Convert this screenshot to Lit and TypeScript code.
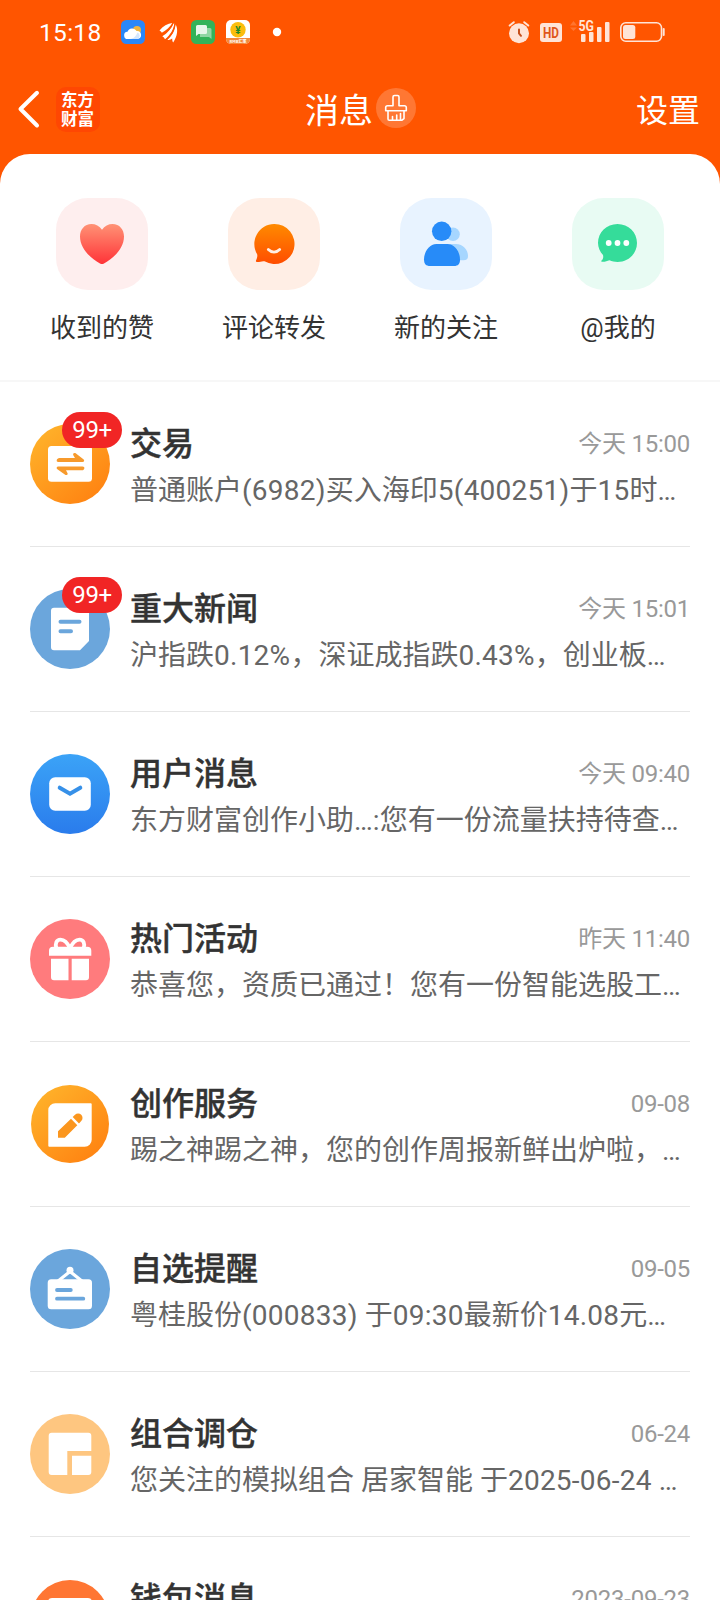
import { LitElement, html, css, svg, nothing, TemplateResult } from "lit";
import { customElement, property } from "lit/decorators.js";

interface Message {
  icon: string;
  title: string;
  time: string;
  text: string;
  badge?: string;
}

const MESSAGES: Message[] = [
  { icon: "trade", title: "交易", time: "今天 15:00", text: "普通账户(6982)买入海印5(400251)于15时…", badge: "99+" },
  { icon: "news", title: "重大新闻", time: "今天 15:01", text: "沪指跌0.12%，深证成指跌0.43%，创业板…", badge: "99+" },
  { icon: "mail", title: "用户消息", time: "今天 09:40", text: "东方财富创作小助…:您有一份流量扶持待查…" },
  { icon: "gift", title: "热门活动", time: "昨天 11:40", text: "恭喜您，资质已通过！您有一份智能选股工…" },
  { icon: "edit", title: "创作服务", time: "09-08", text: "踢之神踢之神，您的创作周报新鲜出炉啦，…" },
  { icon: "sign", title: "自选提醒", time: "09-05", text: "粤桂股份(000833) 于09:30最新价14.08元…" },
  { icon: "combo", title: "组合调仓", time: "06-24", text: "您关注的模拟组合 居家智能 于2025-06-24 …" },
  { icon: "wallet", title: "钱包消息", time: "2023-09-23", text: "" },
];

const gradient = (id: string, from: string, to: string, diagonal = false) => svg`
  <defs><linearGradient id=${id} x1=${diagonal ? 0.15 : 0.5} y1=${diagonal ? 0.1 : 0} x2=${diagonal ? 0.85 : 0.5} y2=${diagonal ? 0.9 : 1}>
    <stop offset="0" stop-color=${from}></stop><stop offset="1" stop-color=${to}></stop>
  </linearGradient></defs>`;

const ROW_ICONS: Record<string, TemplateResult> = {
  trade: svg`${gradient("g", "#ffb029", "#ff8412", true)}
    <circle cx="40" cy="40" r="40" fill="url(#g)"></circle>
    <rect x="18" y="22" width="44" height="35.700" rx="3.500" fill="#fff"></rect>
    <path fill="#f79a2c" d="M28.300 38H52.500c1.800 0 2.200-1.800.9-2.800L46 29.600c-2-1.400-3.800.4-2.400 2.200L45 34H29.500c-3 0-3.800 4-1.200 4z"></path>
    <path fill="#f79a2c" d="M52.500 42.500H28.300c-1.800 0-2.200 1.800-.9 2.800l7.400 5.300c2 1.400 3.800-.4 2.400-2.200L36 46.300h16c2.700 0 3.500-3.800.5-3.800z"></path>`,
  news: svg`<circle cx="40" cy="40" r="40" fill="#6ba6dc"></circle>
    <path fill="#fff" d="M24 18.700h32a3 3 0 0 1 3 3V52l-9 9.300H24a3 3 0 0 1-3-3V21.700a3 3 0 0 1 3-3z"></path>
    <path stroke="#6ba6dc" stroke-width="4" stroke-linecap="round" d="M30.500 32.700h19M30.500 42.300h10.500"></path>`,
  mail: svg`${gradient("g", "#3ba3f7", "#2a7cec")}
    <circle cx="40" cy="40" r="40" fill="url(#g)"></circle>
    <rect x="19.200" y="23.300" width="41.600" height="33.400" rx="6" fill="#fff"></rect>
    <path fill="none" stroke="#3690e8" stroke-width="4" stroke-linecap="round" d="M29.700 33.700l10.300 6.100 10.300-6.100"></path>`,
  gift: svg`<circle cx="40" cy="40" r="40" fill="#ff7b7d"></circle>
    <path fill="none" stroke="#fff" stroke-width="3.800" d="M40 29.500C37.500 23.500 34 20.600 30.500 20.600c-4 0-5.600 4-4.200 8.400M40 29.500C42.500 23.500 46 20.600 49.500 20.600c4 0 5.600 4 4.200 8.400"></path>
    <path fill="#fff" d="M23 27.700h34.300a4 4 0 0 1 4 4v5H19v-5a4 4 0 0 1 4-4zM21 39.700h17.500v21.600H24a3 3 0 0 1-3-3zM41.700 39.700H59v18.600a3 3 0 0 1-3 3H41.700z"></path>`,
  edit: svg`${gradient("g", "#ffb029", "#ff8412", true)}
    <circle cx="40" cy="40" r="39" fill="url(#g)"></circle>
    <path fill="#fff" d="M25.300 19.300h35.400a1 1 0 0 1 1 1v35.400a7 7 0 0 1-7 7H19.300a1 1 0 0 1-1-1V26.300a7 7 0 0 1 7-7z"></path>
    <path fill="#fb961e" d="M28 53.700v-6.500L41 34.800l6.300 6.500L34.800 53.700zM42.700 33l2.300-2.200a4.400 4.400 0 0 1 6.200 6.300L49 39.500z"></path>`,
  sign: svg`<circle cx="40" cy="40" r="40" fill="#6ba6dc"></circle>
    <rect x="17.700" y="30.300" width="44.300" height="30" rx="3.500" fill="#fff"></rect>
    <path fill="none" stroke="#fff" stroke-width="3.200" d="M27.500 32.500L40 22.500l12.500 10"></path>
    <circle cx="40" cy="21.300" r="3.500" fill="#fff"></circle>
    <path stroke="#6ba6dc" stroke-width="3.800" stroke-linecap="round" d="M27 41h13.800M27 49.700h26.300"></path>`,
  combo: svg`<circle cx="40" cy="40" r="40" fill="#fec680"></circle>
    <path fill="#fff" d="M21.700 18.700h36.600a3 3 0 0 1 3 3V37h-24v24H21.700a3 3 0 0 1-3-3V21.700a3 3 0 0 1 3-3zM42 41.700h19.300V58a3 3 0 0 1-3 3H42z"></path>`,
  wallet: svg`<circle cx="40" cy="40" r="39" fill="#ff7633"></circle>
    <rect x="18" y="19" width="44" height="42" rx="4" fill="#fff"></rect>`,
};

const QUICK: { label: string; tone: string; art: TemplateResult }[] = [
  {
    label: "收到的赞", tone: "pink",
    art: svg`${gradient("heart", "#ff9275", "#ff3338")}
      <path fill="url(#heart)" d="M46 31.800C43.500 28 39.500 26 35.500 26 28.500 26 24 31.500 24 38.500 24 50 34 60 44 65.500c1.500.8 2.500.8 4 0C58 60 68 50 68 38.500 68 31.500 63.500 26 56.500 26c-4 0-8 2-10.500 5.800z"></path>`,
  },
  {
    label: "评论转发", tone: "peach",
    art: svg`${gradient("smile", "#ff8a00", "#ff4d00")}
      <path fill="url(#smile)" d="M46 26a20 20 0 1 1-9.500 37.300c-2.500-.6-4.500.8-7.500.7-1 0-1.300-.6-1-1.400.8-2.300 1.900-4.600 1-6.600A20 20 0 0 1 46 26z"></path>
      <path fill="none" stroke="#ffeee4" stroke-width="2.800" stroke-linecap="round" d="M40.300 51.500c3.300 3.400 8.100 3.400 11.400 0"></path>`,
  },
  {
    label: "新的关注", tone: "blue",
    art: svg`<circle cx="53" cy="36.300" r="6.800" fill="#a6d6ff"></circle>
      <path fill="#a6d6ff" d="M50 46h6c7 0 12 6 12 12 0 3-1.500 4.300-4.500 4.300H50z"></path>
      <circle cx="41.700" cy="33.300" r="9.700" fill="#278bf8"></circle>
      <path fill="#278bf8" d="M36.500 46h11C55 46 60 54 60 61.500c0 4.500-2 6.500-6 6.500H30c-4 0-6-2-6-6.500C24 54 29 46 36.500 46z"></path>`,
  },
  {
    label: "@我的", tone: "green",
    art: svg`<path fill="#35dc9a" d="M45.500 26C56.500 26 65 34.500 65 45s-8.500 19-19.500 19c-3 0-5.500-.6-8-1.700-2.500.8-4.500 1.700-7.500 1.500-1 0-1-.7-.4-1.200 1.700-1.600 1.900-3.600 1.400-5.600-3-3.200-5-7.400-5-12C26 34.500 34.500 26 45.500 26z"></path>
      <g fill="#fff"><circle cx="36.700" cy="45" r="2.900"></circle><circle cx="45.500" cy="45" r="2.900"></circle><circle cx="54.300" cy="45" r="2.900"></circle></g>`,
  },
];

@customElement("status-bar")
class StatusBar extends LitElement {
  static styles = css`
    :host { display: flex; align-items: center; height: 64px; padding: 0 55px 0 39px; box-sizing: border-box;
      color: #fff; font-family: Roboto, sans-serif; }
    .clock { width: 82px; padding-top: 2px; font-size: 24.500px; font-weight: 450; line-height: 62px; letter-spacing: 0.3px; }
    .left { display: flex; align-items: center; gap: 11px; }
    .right { display: flex; align-items: center; margin-left: auto; gap: 8px; }
    svg { display: block; overflow: visible; }
    .hd { font: 700 15px Roboto, sans-serif; }
    .net { font: 700 14px Roboto, sans-serif; }
    .tiny { font: 700 4px "Noto Sans CJK SC", sans-serif; }
    .yen { font: 700 10px Roboto, sans-serif; }
  `;

  render() {
    return html`
      <span class="clock">15:18</span>
      <div class="left">
        <svg width="24" height="24" viewBox="0 0 24 24">
          <rect width="24" height="24" rx="5.500" fill="#2a87f8"></rect>
          <circle cx="16" cy="10" r="4" fill="#f0b53f"></circle>
          <path fill="#fff" d="M7 19a3.600 3.600 0 0 1-.5-7.200A5 5 0 0 1 15.600 11a4 4 0 0 1 .9 8z"></path>
          <path fill="#d5e7fd" d="M9 19c4-.5 6-3 7.500-6.500A3.500 3.500 0 0 1 16.500 19z"></path>
        </svg>
        <svg width="24" height="24" viewBox="0 0 24 24" fill="#fff">
          <path d="M3.500 10.500C7 6 11.500 3.400 16.500 3c-2.500 4-6.300 7.200-10.700 9.800-.4-1-1.300-1.700-2.300-2.300z"></path>
          <path d="M6.300 16.300C11.500 13 15.500 8.500 17.500 3.200l.8.300C17.800 9.500 14 15.300 9 19.200c-.5-1.200-1.400-2.200-2.700-2.900z"></path>
          <path d="M11.300 19.800C16 15.800 19 10.500 19.600 4.200 22.300 9 21.500 16 17.200 22.500c-.8-1-1-2.300-1-4-1.400 1.200-3 1.800-4.900 1.300z"></path>
          <path fill="none" stroke="#ff5500" stroke-width="1.100" d="M5.500 15.200C11 12 15.300 7.800 17.300 2.800M9.500 20.500C15 16 18.600 10 19 3.500"></path>
        </svg>
        <svg width="24" height="24" viewBox="0 0 24 24">
          <rect width="24" height="24" rx="5.500" fill="#32b359"></rect>
          <path fill="#8fd6a3" d="M9 8h10a1.500 1.500 0 0 1 1.500 1.500V19L18 17H9z"></path>
          <path fill="#e6f6ea" d="M6.500 5h8A1.500 1.500 0 0 1 16 6.500v6a1.500 1.500 0 0 1-1.500 1.500H7.500L5 16V6.500A1.500 1.500 0 0 1 6.500 5z"></path>
        </svg>
        <svg width="24" height="24" viewBox="0 0 24 24">
          <rect width="24" height="24" rx="5" fill="#fff"></rect>
          <path fill="#f4893a" d="M0 18h24v1a5 5 0 0 1-5 5H5a5 5 0 0 1-5-5z"></path>
          <circle cx="12" cy="9.800" r="7.700" fill="#fbbd0d"></circle>
          <text class="yen" x="12" y="13.500" text-anchor="middle" fill="#228b26">¥</text>
          <text class="tiny" x="12" y="23" text-anchor="middle" fill="#fff">RMB汇率</text>
        </svg>
        <svg width="36" height="24" viewBox="0 0 36 24"><circle cx="16" cy="12" r="4.200" fill="#fff"></circle></svg>
      </div>
      <div class="right">
        <svg width="24" height="24" viewBox="0 0 24 24">
          <circle cx="11" cy="13.200" r="10" fill="#ffe4d7"></circle>
          <path stroke="#ffe4d7" stroke-width="2" stroke-linecap="round" d="M1.700 5.500L5.800 2.200M16.200 2.200l4.100 3.300"></path>
          <path fill="none" stroke="#c6511e" stroke-width="2" stroke-linecap="round" d="M11 9.500V13.500L13 15.800"></path>
        </svg>
        <svg width="22" height="24" viewBox="0 0 22 24">
          <rect y="3" width="22" height="19" rx="3" fill="#ffe4d7"></rect>
          <text class="hd" x="11" y="18" text-anchor="middle" textLength="16" lengthAdjust="spacingAndGlyphs" fill="#e0571b">HD</text>
        </svg>
        <svg width="42" height="24" viewBox="0 0 42 24" fill="#ffe4d7">
          <path fill="#ff7430" d="M0 5.500L3.500 1 7 5.500zM0 7.500h7L3.500 11z"></path>
          <text class="net" x="8.500" y="10.800" textLength="15.500" lengthAdjust="spacingAndGlyphs">5G</text>
          <rect x="11" y="14" width="4.500" height="8" rx="1"></rect>
          <rect x="19" y="12" width="4.500" height="10" rx="1"></rect>
          <rect x="27" y="7" width="4.500" height="15" rx="1"></rect>
          <rect x="35" y="2" width="4.500" height="20" rx="1"></rect>
        </svg>
        <svg width="45" height="24" viewBox="0 0 45 24">
          <rect x=".8" y="2.800" width="40.700" height="18.400" rx="5" fill="none" stroke="#ffe4d7" stroke-width="1.600"></rect>
          <rect x="3" y="5" width="12.300" height="14" rx="2.500" fill="#ffe4d7"></rect>
          <path stroke="#ffe4d7" stroke-width="2" stroke-linecap="round" d="M43.700 9v6"></path>
        </svg>
      </div>`;
  }
}

@customElement("nav-header")
class NavHeader extends LitElement {
  static styles = css`
    :host { display: grid; grid-template-columns: 1fr auto 1fr; align-items: center; height: 90px;
      padding: 0 20px 0 16px; box-sizing: border-box; color: #fff;
      font-family: Roboto, "Noto Sans CJK SC", sans-serif; }
    .left { display: flex; align-items: center; gap: 14px; }
    .logo { display: grid; place-content: center; width: 44px; height: 45px; border-radius: 10px; background: #ff4702; }
    .logo-text { width: 34px; font: 700 16.500px/19px "Noto Sans CJK SC", sans-serif; word-break: break-all; }
    .center { display: flex; align-items: center; gap: 3px; padding-left: 5px; }
    .title { padding-top: 3px; font-size: 34px; line-height: 50px; }
    .brush { width: 40px; height: 40px; margin-bottom: 2px; border-radius: 50%; background: #ff7733; }
    .setting { justify-self: end; padding-top: 3px; font-size: 32px; line-height: 50px; }
    svg { display: block; }
  `;

  render() {
    return html`
      <div class="left">
        <svg width="26" height="40" viewBox="0 0 26 40"><path fill="none" stroke="#fff" stroke-width="4" stroke-linecap="round" stroke-linejoin="round" d="M21 3.800L4.500 20 21 36.500"></path></svg>
        <div class="logo"><div class="logo-text">东方财富</div></div>
      </div>
      <div class="center">
        <span class="title">消息</span>
        <div class="brush">
          <svg width="40" height="40" viewBox="0 0 40 40" fill="none" stroke="#fff" stroke-width="1.600" stroke-linejoin="round" stroke-linecap="round">
            <path d="M17 17.700V9a1.500 1.500 0 0 1 1.500-1.500h3A1.500 1.500 0 0 1 23 9v8.700h5.500a1.800 1.800 0 0 1 1.800 1.800v3.300H9.700v-3.300a1.800 1.800 0 0 1 1.800-1.800zM12 22.800V31a1.300 1.300 0 0 0 1.300 1.300h12.400L28 30.500v-7.700M16.500 31.500v-3M20.700 31.500v-4.500M24.500 31.500v-6"></path>
          </svg>
        </div>
      </div>
      <span class="setting">设置</span>`;
  }
}

@customElement("quick-entries")
class QuickEntries extends LitElement {
  static styles = css`
    :host { display: grid; grid-template-columns: repeat(4, 172px); justify-content: center; height: 228px;
      padding-top: 44px; box-sizing: border-box; border-bottom: 2px solid #f7f7f7;
      font-family: Roboto, "Noto Sans CJK SC", sans-serif; }
    .entry { display: flex; flex-direction: column; align-items: center; gap: 19px; }
    .tile { width: 92px; height: 92px; border-radius: 32px; }
    .pink { background: #feeeee; }
    .peach { background: #ffeee5; }
    .blue { background: #e8f3ff; }
    .green { background: #e8fbf3; }
    .label { font-size: 26px; line-height: 38px; color: #333; }
    svg { display: block; }
  `;

  render() {
    return QUICK.map((q) => html`
      <div class="entry">
        <div class="tile ${q.tone}"><svg width="92" height="92" viewBox="0 0 92 92">${q.art}</svg></div>
        <span class="label">${q.label}</span>
      </div>`);
  }
}

@customElement("message-row")
class MessageRow extends LitElement {
  static styles = css`
    :host { display: flex; gap: 20px; height: 165px; margin: 0 30px; box-sizing: border-box; border-bottom: 1px solid #e6e6e6;
      font-family: Roboto, "Noto Sans CJK SC", sans-serif; }
    .avatar { position: relative; flex: none; width: 80px; height: 80px; margin-top: 42px; }
    .badge { position: absolute; left: 32px; top: -12px; width: 60px; height: 36px; border-radius: 18px;
      background: #f12525; color: #fff; font-size: 24px; line-height: 36px; text-align: center; letter-spacing: -0.4px; }
    .body { flex: 1; min-width: 0; padding-top: 39px; }
    .head { display: flex; justify-content: space-between; align-items: center; height: 46px; }
    .title { font-size: 32px; font-weight: 500; line-height: 46px; color: #333; -webkit-text-stroke: 0.4px #333; }
    .time { font-size: 24px; line-height: 46px; color: #999; letter-spacing: -0.25px; }
    .text { margin-top: 1px; font-size: 28px; line-height: 46px; color: #666; white-space: pre; overflow: hidden; }
    .latin { letter-spacing: 0.25px; }
    svg { display: block; }
  `;

  @property({ attribute: false }) message!: Message;

  /** Latin runs are tracked slightly wider than the surrounding Chinese text. */
  private runs(text: string) {
    return text.split(/([0-9().%:-]+)/).map((part, i) => (i % 2 ? html`<span class="latin">${part}</span>` : part));
  }

  render() {
    const m = this.message;
    return html`
      <div class="avatar">
        <svg width="80" height="80" viewBox="0 0 80 80">${ROW_ICONS[m.icon]}</svg>
        ${m.badge ? html`<span class="badge">${m.badge}</span>` : nothing}
      </div>
      <div class="body">
        <div class="head"><span class="title">${m.title}</span><span class="time">${m.time}</span></div>
        <div class="text">${this.runs(m.text)}</div>
      </div>`;
  }
}

@customElement("app-root")
class AppRoot extends LitElement {
  static styles = css`
    :host { display: block; width: 720px; height: 1600px; overflow: hidden; background: #ff5500; }
    .sheet { height: 1446px; overflow: hidden; border-radius: 30px 30px 0 0; background: #fff; }
  `;

  render() {
    return html`
      <status-bar></status-bar>
      <nav-header></nav-header>
      <main class="sheet" lang="zh-CN">
        <quick-entries></quick-entries>
        ${MESSAGES.map((m) => html`<message-row .message=${m}></message-row>`)}
      </main>`;
  }
}
